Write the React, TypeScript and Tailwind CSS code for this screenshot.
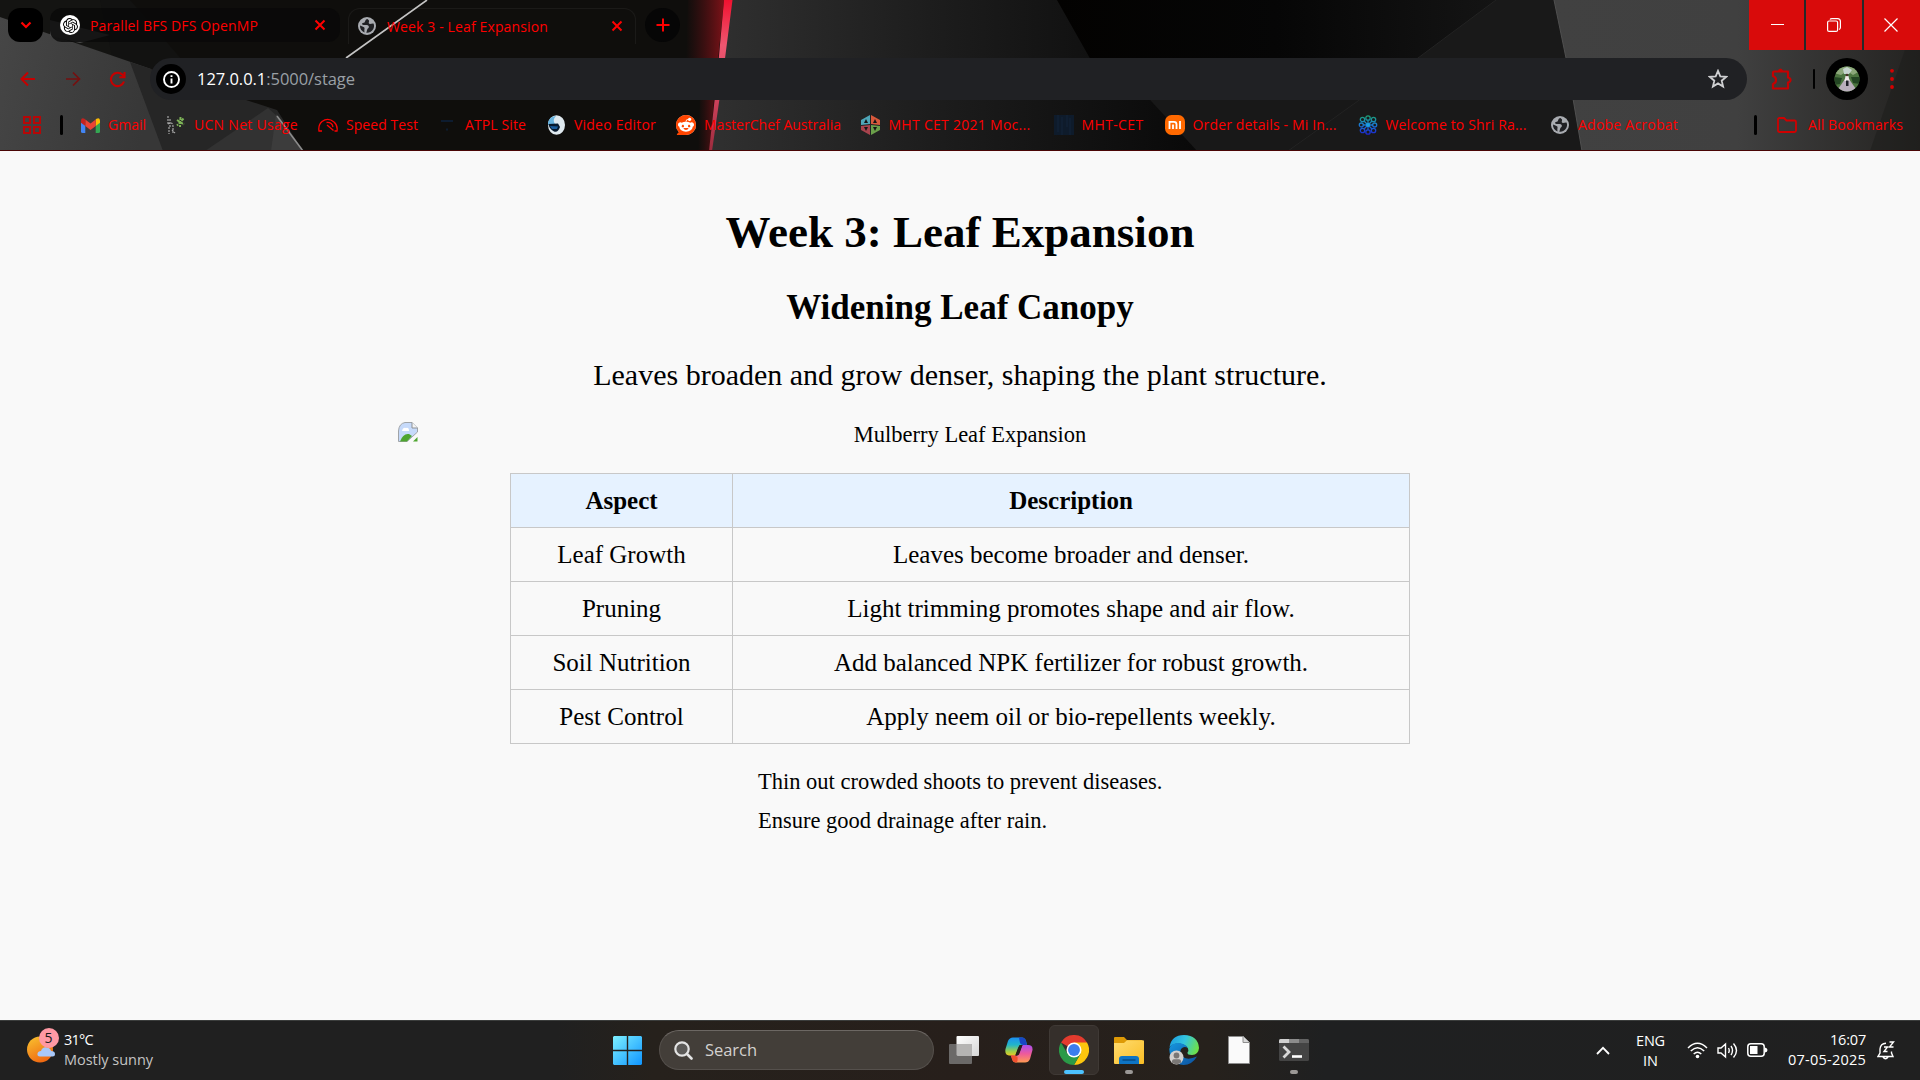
import { useLayoutEffect, useRef, type ReactNode } from "react";
import { SiOpenai, SiReddit } from "react-icons/si";

const ui = "font-['Open_Sans','Noto_Sans',sans-serif] whitespace-nowrap";

/* Text whose tracking is adjusted so that it fills the given width. */
function Fit({ w, className = "", children }: { w: number; className?: string; children: ReactNode }) {
  const ref = useRef<HTMLSpanElement>(null);
  useLayoutEffect(() => {
    const el = ref.current;
    if (!el) return;
    el.style.letterSpacing = "0px";
    const n = (el.textContent || "").length;
    el.style.letterSpacing = `${(w - el.getBoundingClientRect().width) / n}px`;
  }, [w]);
  return (
    <span ref={ref} className={`${ui} inline-block shrink-0 ${className}`}>
      {children}
    </span>
  );
}

function Backdrop() {
  return (
    <svg className="absolute inset-0" width="1920" height="151" viewBox="0 0 1920 151">
      <defs>
        <linearGradient id="b1" x1="0" x2="1" y1="0" y2="0.2">
          <stop offset="0" stopColor="#464646" />
          <stop offset="1" stopColor="#373737" />
        </linearGradient>
        <linearGradient id="b2" x1="0" x2="1" y1="0" y2="0">
          <stop offset="0" stopColor="#303030" />
          <stop offset="0.45" stopColor="#1d1d1d" />
          <stop offset="1" stopColor="#090909" />
        </linearGradient>
        <linearGradient id="b3" x1="0" x2="1" y1="0" y2="0">
          <stop offset="0" stopColor="#030201" />
          <stop offset="0.5" stopColor="#060606" />
          <stop offset="1" stopColor="#141414" />
        </linearGradient>
        <linearGradient id="b4" x1="0" x2="1" y1="0" y2="0">
          <stop offset="0" stopColor="#414141" />
          <stop offset="0.5" stopColor="#404040" />
          <stop offset="1" stopColor="#242321" />
        </linearGradient>
        <linearGradient id="glow" x1="0" x2="1" y1="0" y2="0">
          <stop offset="0" stopColor="#5a1014" stopOpacity="0" />
          <stop offset="1" stopColor="#7d1218" />
        </linearGradient>
        <linearGradient id="ray" x1="0" x2="0" y1="0" y2="1">
          <stop offset="0" stopColor="#f01230" />
          <stop offset="0.3" stopColor="#ee5670" />
          <stop offset="0.6" stopColor="#d84560" />
          <stop offset="1" stopColor="#9c2c3e" />
        </linearGradient>
      </defs>
      <rect width="1920" height="151" fill="#0f0e0c" />
      <path d="M0 0H100L140 66L0 17Z" fill="#141412" />
      <path d="M100 0L112 56L150 69H190L130 0Z" fill="#121211" />
      <path d="M0 17L151 69L165 151H0Z" fill="url(#b1)" />
      <path d="M130 62L151 69L277 110L303 151H163Z" fill="#262626" />
      <path d="M50 20L110 35L80 43L50 36Z" fill="#4a4a4a" />
      <path d="M205 151L268 108L277 116L303 151Z" fill="#323232" />
      <path d="M276 114L271 151H303Z" fill="#3c3c3c" />
      <path d="M427 0L346 58" stroke="#c4c4c4" strokeWidth="1.6" />
      <path d="M277 116L303 151" stroke="#8c8c8c" strokeWidth="1.6" />
      <path d="M688 0H724L718 60L686 60Z" fill="url(#glow)" />
      <path d="M700 98H714L710 151H698Z" fill="url(#glow)" opacity="0.6" />
      <path d="M732 0H1057L1092 58L1150 100L1197 151H711Z" fill="url(#b2)" />
      <path d="M724 0H732.500L722.500 78L712 151H709L717 78Z" fill="url(#ray)" />
      <path d="M1057 0H1496L1418 58L1290 151H1197L1150 100L1092 62Z" fill="url(#b3)" />
      <path d="M1150 100H1360L1290 151H1197Z" fill="#181818" />
      <path d="M1496 0H1554L1566 58L1582 151H1288L1418 58Z" fill="#191919" />
      <path d="M1496 0L1418 58L1288 151" stroke="#232323" fill="none" />
      <path d="M1554 0H1920V151H1582L1566 58Z" fill="url(#b4)" />
      <path d="M1905 50L1870 151H1920V50Z" fill="#1c1b1a" opacity="0.5" />
      <path d="M1554 0L1566 58L1582 151" stroke="#505050" fill="none" />
      <rect y="150" width="1920" height="1" fill="#4a0606" />
    </svg>
  );
}

function Globe() {
  return (
    <svg width="18" height="18" viewBox="0 0 18 18" className="shrink-0">
      <circle cx="9" cy="9" r="9" fill="#a8abb0" />
      <path d="M9.500 2C7 2.500 7.500 4.500 6.500 5.500C5.500 6 4 5.500 4 7.200C4.500 8.500 8 7.500 9.800 8.200C11.500 9 11 11 9.800 11.500C9 12 9 14 8.300 15.800C11 16.200 14 14.500 15.300 12C16.300 10 16.300 8 15.500 6.500C14 6.200 12.500 7.300 11.200 6.800C10 6 11.500 4.500 11 3.500Z" fill="#202124" />
      <path d="M2 8.500C3.500 9.500 5.500 9.500 6.300 10.500C7 11.500 6 12.500 6.500 15.500C3.500 14.300 1.800 11.500 2 8.500Z" fill="#202124" />
    </svg>
  );
}

function Close() {
  return (
    <svg width="12" height="12" viewBox="0 0 12 12" stroke="#f00" strokeWidth="2" className="shrink-0">
      <path d="M1.500 1.500L10.500 10.500M10.500 1.500L1.500 10.500" />
    </svg>
  );
}

function TabStrip() {
  return (
    <div className="flex h-[58px] items-start">
      <div className="ml-2 mt-2 flex h-[34px] w-[35px] items-center justify-center rounded-xl bg-black">
        <svg width="12" height="8" viewBox="0 0 12 8" fill="none" stroke="#f00" strokeWidth="2.200"><path d="M1.500 1.500L6 6L10.500 1.500" /></svg>
      </div>
      <div className="ml-[7px] mt-2 flex h-[34px] w-[290px] items-center rounded-xl bg-[#090909]/80 pl-[10px]">
        <span className="flex h-5 w-5 items-center justify-center rounded-full bg-white text-black"><SiOpenai size={15} /></span>
        <Fit w={168} className="ml-[10px] mr-auto pt-px text-[14px] text-[#f00]">Parallel BFS DFS OpenMP</Fit>
        <span className="mr-[14px] flex"><Close /></span>
      </div>
      <div className="ml-2 mt-2 flex h-[36px] w-[288px] items-center rounded-t-xl border border-b-0 border-white/5 pb-[2px] pl-[9px]">
        <Globe />
        <Fit w={161} className="ml-[11px] mr-auto pt-px text-[14px] text-[#f00]">Week 3 - Leaf Expansion</Fit>
        <span className="mr-[12px] flex"><Close /></span>
      </div>
      <div className="ml-[9px] mt-2 flex h-[34px] w-[35px] items-center justify-center rounded-full bg-[#060606]">
        <svg width="14" height="14" viewBox="0 0 14 14" stroke="#f00" strokeWidth="2"><path d="M7 0.500V13.500M0.500 7H13.500" /></svg>
      </div>
      <div className="ml-auto flex h-[50px] gap-[2px] bg-[#25292a]">
        <div className="flex w-[55px] items-center justify-center bg-[#d90b0b] pl-px">
          <svg width="13" height="13" viewBox="0 0 13 13" stroke="#fff"><path d="M0 5.500H13" /></svg>
        </div>
        <div className="flex w-[56px] items-center justify-center bg-[#d90b0b]">
          <svg width="14" height="14" viewBox="0 0 14 14" fill="none" stroke="#fff" strokeWidth="1.200">
            <rect x="0.600" y="3" width="10" height="10.400" rx="1.500" />
            <path d="M3 1.500Q3.500 0.600 5 0.600H10.500Q13.400 0.600 13.400 3.500V9.500Q13.400 11 12 11.500" />
          </svg>
        </div>
        <div className="flex w-[56px] items-center justify-center bg-[#d90b0b] pr-[2px]">
          <svg width="14" height="14" viewBox="0 0 14 14" stroke="#fff" strokeWidth="1.200"><path d="M0.500 0.500L13.500 13.500M13.500 0.500L0.500 13.500" /></svg>
        </div>
      </div>
    </div>
  );
}

function Toolbar() {
  return (
    <div className="flex h-[42px] items-center">
      <svg className="ml-5" width="16" height="16" viewBox="0 0 16 16" fill="none" stroke="#c60000" strokeWidth="2"><path d="M15 8H2M8 1.500L1.500 8L8 14.500" /></svg>
      <svg className="ml-[29px]" width="16" height="16" viewBox="0 0 16 16" fill="none" stroke="#760f0f" strokeWidth="1.700"><path d="M1 8H14M8 1.500L14.500 8L8 14.500" /></svg>
      <svg className="ml-[28px]" width="17" height="17" viewBox="0 0 17 17" fill="none" stroke="#c60000" strokeWidth="2.100"><path d="M15 10.500A6.700 6.700 0 1 1 13.500 3.800L15.500 6M15.500 1V6.200H10.300" /></svg>
      <div className="ml-[24px] flex h-[42px] w-[1597px] items-center rounded-full bg-[#202124] pl-[6px]">
        <span className="flex h-[30px] w-[30px] items-center justify-center rounded-full bg-black">
          <svg width="17" height="17" viewBox="0 0 17 17" fill="none" stroke="#fff" strokeWidth="1.900"><circle cx="8.500" cy="8.500" r="7.500" /><path d="M8.500 7.500V12.500M8.500 4.200V6" /></svg>
        </span>
        <Fit w={158} className="ml-[11px] pt-px text-[16.500px] text-[#9aa0a6]"><span className="text-white">127.0.0.1</span>:5000/stage</Fit>
        <svg className="ml-auto mr-[19px]" width="20" height="20" viewBox="0 0 20 20" fill="none" stroke="#cfd0d2" strokeWidth="1.800"><path d="M10 1.800L12.300 7.300L18.300 7.800L13.700 11.700L15.100 17.500L10 14.400L4.900 17.500L6.300 11.700L1.700 7.800L7.700 7.300Z" /></svg>
      </div>
      <svg className="ml-[23px]" width="22" height="24" viewBox="0 0 22 24" fill="none" stroke="#c60000" strokeWidth="2.200"><path d="M4 4.500H18V10.500Q20.500 11 20.500 13T18 15.500V21.500H3V17Q6 16 6 13T3 9V5.500Q3 4.500 4 4.500Z" strokeLinejoin="round" /><path d="M8 4Q8.500 1.500 10.500 1.500T13 4Z" fill="#c60000" stroke="none" /></svg>
      <div className="ml-[21px] h-[20px] w-[2px] rounded bg-black" />
      <div className="ml-[11px] flex h-[42px] w-[42px] shrink-0 items-center justify-center rounded-full bg-black">
        <svg width="26" height="26" viewBox="0 0 26 26">
          <defs><clipPath id="av"><circle cx="13" cy="13" r="12.500" /></clipPath></defs>
          <g clipPath="url(#av)">
            <rect width="26" height="26" fill="#4d7540" />
            <path d="M0 0H26V5L19 9L13 5L7 9L0 7Z" fill="#8ba779" />
            <path d="M9 3L13 1L18 4L15 8H10Z" fill="#c5d3cd" />
            <path d="M0 11L8 12L6 18L0 19ZM17 11H26V18L19 17Z" fill="#234523" />
            <path d="M11 13H15L24 26H2Z" fill="#b9aebb" />
            <path d="M11.500 10H14.500L15.500 15H10.500Z" fill="#f0eaea" />
            <path d="M12 14.500H14.500V20H12Z" fill="#1f1f28" />
            <circle cx="13" cy="9" r="1.300" fill="#4a3027" />
          </g>
        </svg>
      </div>
      <svg className="ml-[22px]" width="4" height="22" viewBox="0 0 4 22" fill="#d80000"><circle cx="2" cy="2.800" r="1.900" /><circle cx="2" cy="11" r="1.900" /><circle cx="2" cy="19" r="1.900" /></svg>
    </div>
  );
}

const icons: Record<string, ReactNode> = {
  gmail: (
    <svg width="19" height="15" viewBox="0 0 19 15">
      <path d="M0 3V13.500Q0 15 1.500 15H4.300V5.500Z" fill="#4285f4" />
      <path d="M19 3V13.500Q19 15 17.500 15H14.700V5.500Z" fill="#34a853" />
      <path d="M14.700 1.500V8L19 4.800V2.300Q18.500 -0.800 15.500 0.800Z" fill="#fbbc04" />
      <path d="M4.300 8V1.500L9.500 5.400L14.700 1.500V8L9.500 11.900Z" fill="#ea4335" />
      <path d="M0 2.300V4.800L4.300 8V1.500L3.500 0.800Q0.500 -0.800 0 2.300Z" fill="#c5221f" />
    </svg>
  ),
  ucn: (
    <svg width="20" height="20" viewBox="0 0 20 20" fill="none">
      <path d="M2 1V9M4 4V13M2 9Q7 6 7 12V18M3 12V19M6 15L9 18" stroke="#a5a5a5" strokeWidth="1.200" strokeDasharray="2 1" />
      <path d="M14.500 2L14 12M11 5L18 9.500M17.500 3.500L11 10.500" stroke="#7db357" strokeWidth="2" strokeDasharray="3 1" />
    </svg>
  ),
  speed: (
    <svg width="20" height="14" viewBox="0 0 20 14" fill="none" stroke="#f00" strokeWidth="1.300">
      <path d="M4 13H1Q0 7 4 3.500Q10 -1 16 4Q20 7.500 19 13H16.500M8.500 4.500Q14 4 15 9M9 7L15.500 12.500" />
    </svg>
  ),
  atpl: (
    <svg width="14" height="14" viewBox="0 0 14 14" fill="#0d1c30"><path d="M1 2H13V4H1ZM6 10.500H8V12.500H6Z" /></svg>
  ),
  video: (
    <svg width="19" height="20" viewBox="0 0 19 20">
      <ellipse cx="9.500" cy="10" rx="8.500" ry="9.800" fill="#dfe9ef" />
      <path d="M1 7Q3 1 9 1Q5 5 8 9L1 10Z" fill="#69b3de" />
      <path d="M1.500 9L11 8.500L13 12Q11 18 7 16.500Q2 14 1.500 9Z" fill="#07192d" />
      <path d="M3 11L11 11.500L10 14H5Z" fill="#195a9a" />
    </svg>
  ),
  reddit: <span className="flex h-5 w-5 items-center justify-center rounded-full bg-white text-[#ff4500]"><SiReddit size={20} /></span>,
  mht: (
    <svg width="19" height="20" viewBox="0 0 19 20">
      <path d="M9 0L0 5V10L9 9Z" fill="#4ea6b8" />
      <path d="M10 0L19 5V10L10 9Z" fill="#d8593c" />
      <path d="M0 11L9 10V20L0 15Z" fill="#a8434d" />
      <path d="M19 11L10 10V20L19 15Z" fill="#6ba04a" />
      <path d="M3 8L5 4L7 8ZM12 8L14 4L16 8ZM3 12H7L5 16ZM12 12H16L14 16Z" fill="#151515" />
    </svg>
  ),
  cet: (
    <svg width="20" height="20" viewBox="0 0 20 20"><path d="M0 0H20V20H0Z" fill="#0e1b2b" /><path d="M4 0V17M8 2V20M13 0V12M16 3V20" stroke="#132337" strokeWidth="1.200" /></svg>
  ),
  mi: (
    <svg width="20" height="20" viewBox="0 0 20 20">
      <rect width="20" height="20" rx="6.500" fill="#ff6900" />
      <path d="M4.500 14V6.800H9Q11.500 6.800 11.500 9.300V14M8 9.500V14M15 6V14" stroke="#fff" strokeWidth="1.800" fill="none" />
    </svg>
  ),
  shri: (
    <svg width="20" height="20" viewBox="0 0 20 20" fill="none" strokeWidth="1.300">
      <defs><linearGradient id="sh" gradientUnits="userSpaceOnUse" x1="0" x2="0" y1="0" y2="20"><stop offset="0" stopColor="#1ba36c" /><stop offset="0.450" stopColor="#1a7fd0" /><stop offset="1" stopColor="#1c1fd0" /></linearGradient></defs>
      <g stroke="url(#sh)">
        <circle cx="10" cy="3" r="2.200" /><circle cx="10" cy="17" r="2.200" />
        <circle cx="4.500" cy="4.500" r="2.200" /><circle cx="15.500" cy="4.500" r="2.200" />
        <circle cx="4.500" cy="15.500" r="2.200" /><circle cx="15.500" cy="15.500" r="2.200" />
        <circle cx="3.300" cy="10" r="2" /><circle cx="16.700" cy="10" r="2" />
        <path d="M10 5V15M5 10H15M6 6L14 14M14 6L6 14" />
      </g>
      <circle cx="10" cy="10" r="2" fill="#1a9fe0" />
    </svg>
  ),
  globe: <Globe />,
};

/* icon, label, distance to the next entry, label width */
const bookmarks: [string, string, number, number][] = [
  ["gmail", "Gmail", 86, 38],
  ["ucn", "UCN Net Usage", 152, 104],
  ["speed", "Speed Test", 119, 72],
  ["atpl", "ATPL Site", 109, 61],
  ["video", "Video Editor", 130, 82],
  ["reddit", "MasterChef Australia", 184.5, 137],
  ["mht", "MHT CET 2021 Moc...", 193, 142],
  ["cet", "MHT-CET", 111, 62],
  ["mi", "Order details - Mi In...", 193, 144],
  ["shri", "Welcome to Shri Ra...", 192.5, 141],
  ["globe", "Adobe Acrobat", 178, 100],
];

function Bookmarks() {
  return (
    <div className="flex h-[50px] items-center">
      <svg className="ml-[23px]" width="18" height="18" viewBox="0 0 18 18" fill="none" stroke="#b40808" strokeWidth="2"><path d="M1 1H7V7H1ZM11 1H17V7H11ZM1 11H7V17H1ZM11 11H17V17H11Z" /></svg>
      <div className="ml-[19px] mr-[17px] h-5 w-[3px] rounded bg-black" />
      {bookmarks.map(([icon, label, w, tw]) => (
        <div key={label} className="flex shrink-0 items-center" style={{ width: w }}>
          <span className="flex w-5 shrink-0 justify-center">{icons[icon]}</span>
          <Fit w={tw} className="ml-2 text-[14px] leading-5 text-[#f00]">{label}</Fit>
        </div>
      ))}
      <div className="ml-auto mr-[20px] h-5 w-[3px] rounded bg-black" />
      <svg width="20" height="16" viewBox="0 0 20 16" fill="none" stroke="#d00000" strokeWidth="1.800"><path d="M1 2.500Q1 1 2.500 1H7L9.500 3.500H17.500Q19 3.500 19 5V13.500Q19 15 17.500 15H2.500Q1 15 1 13.500Z" /></svg>
      <Fit w={95} className="ml-[11px] mr-[17px] text-[14px] leading-5 text-[#f00]">All Bookmarks</Fit>
    </div>
  );
}

const rows = [
  ["Leaf Growth", "Leaves become broader and denser."],
  ["Pruning", "Light trimming promotes shape and air flow."],
  ["Soil Nutrition", "Add balanced NPK fertilizer for robust growth."],
  ["Pest Control", "Apply neem oil or bio-repellents weekly."],
];

function Page() {
  return (
    <main className="flex h-[869px] flex-col items-center bg-[#f9f9f9] pt-[55px] font-['Liberation_Serif',serif] text-black">
      <h1 className="text-[45px] font-bold leading-[52px]">Week 3: Leaf Expansion</h1>
      <h2 className="mt-[30px] text-[35px] font-bold leading-[40px]">Widening Leaf Canopy</h2>
      <p className="mt-[30px] text-[30px] leading-[34px]">Leaves broaden and grow denser, shaping the plant structure.</p>
      <div className="mt-[29px] flex h-[27px] w-[1125px] items-start">
        <svg className="mt-px" width="20" height="20" viewBox="0 0 20 20">
          <path d="M0.500 19.500V9Q1 1.500 7 0.500H14L19.500 6V10L9 19.500Z" fill="#c6dafa" stroke="#a0a4a8" />
          <path d="M4 9Q5 5 8 6Q11 5 11 9Z" fill="#fff" />
          <path d="M14 0.500V6H19.500" fill="#f5f5f5" stroke="#8d9195" />
          <path d="M2 19.500Q5 11 11 12L14 14L9 19.500Z" fill="#4ea52f" />
          <path d="M15 19.500L19.500 15V19.500Z" fill="#4ea52f" />
        </svg>
        <span className="grow pt-px text-center text-[22.500px] leading-[26px]">Mulberry Leaf Expansion</span>
      </div>
      <table className="mt-[25px] w-[900px] table-fixed border-collapse text-center text-[25px] leading-[30px]">
        <thead>
          <tr className="h-[54px] bg-[#e6f2ff]">
            <th className="w-[222px] border border-[#c8c8c8]">Aspect</th>
            <th className="border border-[#c8c8c8]">Description</th>
          </tr>
        </thead>
        <tbody>
          {rows.map(([a, d]) => (
            <tr key={a} className="h-[54px]">
              <td className="border border-[#c8c8c8]">{a}</td>
              <td className="border border-[#c8c8c8]">{d}</td>
            </tr>
          ))}
        </tbody>
      </table>
      <ul className="mt-[18px] w-[404px] whitespace-nowrap text-[22.500px] leading-[39px]">
        <li>Thin out crowded shoots to prevent diseases.</li>
        <li>Ensure good drainage after rain.</li>
      </ul>
    </main>
  );
}

function Chrome() {
  return (
    <svg width="30" height="30" viewBox="0 0 48 48">
      <path d="M24 24L3.200 12A24 24 0 0 1 44.800 12Z" fill="#e33b2e" />
      <path d="M24 24V12H44.800A24 24 0 0 1 24 48L34.400 30Z" fill="#fcc60e" />
      <path d="M24 24L34.400 30L24 48A24 24 0 0 1 3.200 12L13.600 30Z" fill="#2a9a47" />
      <circle cx="24" cy="24" r="12" fill="#fff" />
      <circle cx="24" cy="24" r="9.500" fill="#3b7ded" />
    </svg>
  );
}

function Copilot() {
  return (
    <svg width="28" height="26" viewBox="0 0 28 26">
      <defs>
        <linearGradient id="c1" x1="0" x2="0" y1="0" y2="1"><stop offset="0" stopColor="#1b8ff2" /><stop offset="0.400" stopColor="#22b5c9" /><stop offset="0.750" stopColor="#9fcf48" /><stop offset="1" stopColor="#f2c61d" /></linearGradient>
        <linearGradient id="c2" x1="0" x2="0" y1="0" y2="1"><stop offset="0" stopColor="#a84ef0" /><stop offset="0.500" stopColor="#ee5a9b" /><stop offset="1" stopColor="#ff9a52" /></linearGradient>
      </defs>
      <path d="M8 0.500H17Q20 0.500 21 4L22 8H17Q14 8 13 11L10 19Q8 18.500 4 18.500Q-0.500 18 0.500 12L3 4Q4.500 0.500 8 0.500Z" fill="url(#c1)" />
      <path d="M14 0.500H17Q20 0.500 21 4L22 8H18Q16 8 15 6Z" fill="#1746c4" />
      <path d="M20 25.500H11Q8 25.500 7 22L6 18.500H11Q14 18 15 14L17.500 8H23Q28 8 27.500 13L25 22Q23.500 25.500 20 25.500Z" fill="url(#c2)" />
      <path d="M6 18.500H10L12.500 20Q13 25.500 11 25.500Q8 25.500 7 22Z" fill="#f0502f" />
      <path d="M14.500 8H17.500L14 17.500Q13 19 10.500 18.500Z" fill="#261f1b" />
    </svg>
  );
}

function Edge() {
  return (
    <svg width="30" height="30" viewBox="0 0 30 30">
      <defs>
        <linearGradient id="e1" x1="0" x2="1" y1="0.200" y2="0.500"><stop offset="0" stopColor="#1c9de0" /><stop offset="0.500" stopColor="#34c5df" /><stop offset="1" stopColor="#6de04b" /></linearGradient>
        <linearGradient id="e2" x1="0" x2="1" y1="0" y2="1"><stop offset="0" stopColor="#1697e0" /><stop offset="1" stopColor="#0c4f9c" /></linearGradient>
      </defs>
      <path d="M0.500 12Q2.500 0 15 0Q29 0.500 30 13Q29.500 19.500 23 20Q18 20 18.500 17.500Q20 16 19 13.500Q16 8.500 8 8.500Q3 9 0.500 12Z" fill="url(#e1)" />
      <path d="M0.300 14Q1 9 8 8Q16 8 19 13Q15 10.500 12 14Q10 18 14 22Q19 25.500 28 21.500Q23 30 14.500 30Q1 29 0.300 14Z" fill="url(#e2)" />
      <circle cx="7.500" cy="22.500" r="7" fill="#d2d0ce" />
      <circle cx="7.500" cy="20.500" r="2.900" fill="#7a7775" />
      <path d="M2.800 27.500Q3 24.300 5 24.300H10Q12 24.300 12.200 27.500Q7.500 31 2.800 27.500Z" fill="#7a7775" />
    </svg>
  );
}

function TaskItem({ mark, active, children }: { mark?: boolean; active?: boolean; children: ReactNode }) {
  return (
    <div className={`relative flex h-[50px] w-[50px] items-center justify-center rounded-md ${active ? "border border-[#3f3935] bg-[#352f2b]" : ""}`}>
      {children}
      {active && <span className="absolute bottom-0 h-1 w-5 rounded-full bg-[#4cc2ff]" />}
      {mark && <span className="absolute bottom-[1px] h-1 w-2 rounded-full bg-[#9b9896]" />}
    </div>
  );
}

function Taskbar() {
  return (
    <footer className={`flex h-[60px] border-t border-[#3b3d3c] bg-[linear-gradient(90deg,#202020_0%,#202020_29%,#26211c_34%,#271f1b_50%,#26211c_63%,#1f2021_69%,#202020_100%)] ${ui}`}>
      <div className="flex w-[613px] items-start pl-[27px]">
        <div className="relative mt-[7px] h-[36px] w-[34px]">
          <svg width="34" height="36" viewBox="0 0 34 36">
            <defs>
              <linearGradient id="sun" x1="0" x2="0.500" y1="0" y2="1"><stop offset="0" stopColor="#f9c530" /><stop offset="1" stopColor="#ef6a12" /></linearGradient>
            </defs>
            <circle cx="13" cy="21.500" r="13" fill="url(#sun)" />
            <path d="M13 28.500Q10 28.500 10.500 25.500Q11 23 14 23Q15.500 18.500 20 19.500Q23.500 20 24 23Q28 23 28 26Q28 28.500 25.500 28.500Z" fill="#a9c8f8" />
          </svg>
          <span className="absolute left-[11.5px] top-0 flex h-5 w-5 items-center justify-center rounded-full bg-[#ff99a4] text-[14px] leading-5 text-[#1a1a1a]">5</span>
        </div>
        <div className="ml-[3px] mt-[9px] flex flex-col items-start text-[14.500px] leading-5">
          <Fit w={29} className="text-white">31°C</Fit>
          <Fit w={89} className="text-[#c4c4c4]">Mostly sunny</Fit>
        </div>
      </div>
      <div className="flex items-center pb-px">
        <svg width="29" height="29" viewBox="0 0 29 29">
          <defs><linearGradient id="win" gradientUnits="userSpaceOnUse" x1="0" x2="29" y1="0" y2="29"><stop offset="0" stopColor="#7df0ff" /><stop offset="1" stopColor="#0f95ff" /></linearGradient></defs>
          <path d="M1 0H13.800V13.800H0V1ZM15.200 0H28L29 1V13.800H15.200ZM0 15.200H13.800V29H1L0 28ZM15.200 15.200H29V28L28 29H15.200Z" fill="url(#win)" />
        </svg>
        <div className="ml-[17px] flex h-[40px] w-[275px] items-center rounded-full border border-[#55504c] border-t-[#6c6763] bg-[#433e39] pl-[14px]">
          <svg width="19" height="19" viewBox="0 0 19 19" fill="none" stroke="#e4e4e4" strokeWidth="2.200"><circle cx="8" cy="8" r="6.700" fill="#5c5a58" /><path d="M13 13L17.500 17.500" strokeWidth="2.600" strokeLinecap="round" /></svg>
          <Fit w={52} className="ml-[12px] pt-px text-[16.500px] text-[#d3d1cf]">Search</Fit>
        </div>
        <div className="ml-[5px] flex items-center gap-[5px]">
          <TaskItem>
            <svg width="30" height="28" viewBox="0 0 30 28"><defs><linearGradient id="tv" x1="0" x2="1" y1="0" y2="1"><stop offset="0" stopColor="#fff" /><stop offset="1" stopColor="#d6d6d6" /></linearGradient></defs><rect x="7.500" width="22.500" height="20" rx="1" fill="url(#tv)" /><rect y="8" width="23" height="20" rx="1" fill="#6b6968" /><path d="M7.500 8H23V20H8.500L7.500 19Z" fill="#b5b4b3" /></svg>
          </TaskItem>
          <TaskItem><Copilot /></TaskItem>
          <TaskItem active><Chrome /></TaskItem>
          <TaskItem mark>
            <svg width="30" height="27" viewBox="0 0 30 27">
              <defs><linearGradient id="fo" x1="0" x2="1" y1="0" y2="1"><stop offset="0" stopColor="#ffdc70" /><stop offset="1" stopColor="#fabd24" /></linearGradient></defs>
              <path d="M0 1Q0 0 1 0H10L13 3H28V10H0Z" fill="#de9a06" />
              <path d="M0 6H10L13 3.300H29Q30 3.300 30 4.300V26Q30 27 29 27H1Q0 27 0 26Z" fill="url(#fo)" />
              <path d="M5 27V22Q5 19 8 19H22Q25 19 25 22V27Z" fill="#0e74c4" />
              <path d="M8.500 23H21.500" stroke="#074b86" strokeWidth="1.500" />
            </svg>
          </TaskItem>
          <TaskItem><Edge /></TaskItem>
          <TaskItem>
            <svg width="22" height="28" viewBox="0 0 22 28"><path d="M0.500 0.500H15.500L21.500 6.500V27.500H0.500Z" fill="#fafafa" stroke="#8d8d8d" /><path d="M15 0.500V6.500H21.500" fill="#d9d9d9" stroke="#8d8d8d" /></svg>
          </TaskItem>
          <TaskItem mark>
            <svg width="30" height="22" viewBox="0 0 30 22"><rect width="30" height="22" rx="1.500" fill="#444" /><path d="M0 4V1.500Q0 0 1.500 0H10V4Z" fill="#cfcfcf" /><path d="M10 0H20V4H10Z" fill="#8c8c8c" /><path d="M20 0H28.500Q30 0 30 1.500V4H20Z" fill="#636363" /><path d="M4.500 7.500L10 13L4.500 18.500" stroke="#d8d8d8" strokeWidth="2.800" fill="none" /><path d="M13 17.500H23" stroke="#fff" strokeWidth="2.600" /></svg>
          </TaskItem>
        </div>
      </div>
      <div className="ml-auto flex items-center pb-px text-white">
        <svg width="14" height="9" viewBox="0 0 14 9" fill="none" stroke="#fff" strokeWidth="1.800"><path d="M1 8L7 1.800L13 8" /></svg>
        <div className="ml-[26px] flex w-[29px] flex-col items-center pt-px text-[14.500px] leading-5">
          <Fit w={29}>ENG</Fit>
          <Fit w={15}>IN</Fit>
        </div>
        <svg className="ml-[22px]" width="21" height="17" viewBox="0 0 21 17" fill="none" stroke="#fff" strokeWidth="1.500"><path d="M1 6Q10.500 -3.500 20 6M3.800 9Q10.500 2.500 17.200 9M6.700 12Q10.500 8.500 14.300 12" /><circle cx="10.500" cy="14.500" r="1.800" fill="#fff" stroke="none" /></svg>
        <svg className="ml-[9px]" width="21" height="17" viewBox="0 0 21 17" fill="none" stroke="#fff" strokeWidth="1.400"><path d="M1 6V11H4L8.500 15V2L4 6ZM11.500 6Q13 8.500 11.500 11M14 4Q17 8.500 14 13M16.500 1.500Q22.500 8.500 16.500 15.500" /></svg>
        <svg className="ml-[9px]" width="21" height="14" viewBox="0 0 21 14"><rect x="0.800" y="0.800" width="16.400" height="12.400" rx="3" fill="none" stroke="#fff" strokeWidth="1.500" /><rect x="3" y="3" width="7.500" height="8" fill="#fff" /><path d="M18 4.500Q20.500 5 20.500 7Q20.500 9 18 9.500Z" fill="#fff" /></svg>
        <div className="ml-[20px] flex flex-col items-end text-[14.500px] leading-5">
          <Fit w={36}>16:07</Fit>
          <Fit w={78}>07-05-2025</Fit>
        </div>
        <svg className="ml-[11px] mr-[25px]" width="18" height="19" viewBox="0 0 18 19" fill="none" stroke="#fff" strokeWidth="1.400"><path d="M9 2.300Q3.500 2.500 3 8V12L1 15.500H16L14.500 12V10.500M6 16Q8.500 19.500 11 16M7 6H10.500L7 10.500H10.500M12.500 1H16.500L12.500 6H16.500" /></svg>
      </div>
    </footer>
  );
}

export default function App() {
  return (
    <div className="flex h-[1080px] w-[1920px] flex-col overflow-hidden bg-[#f9f9f9]">
      <header className="relative h-[151px] shrink-0">
        <Backdrop />
        <div className="relative">
          <TabStrip />
          <Toolbar />
          <Bookmarks />
        </div>
      </header>
      <Page />
      <Taskbar />
    </div>
  );
}
